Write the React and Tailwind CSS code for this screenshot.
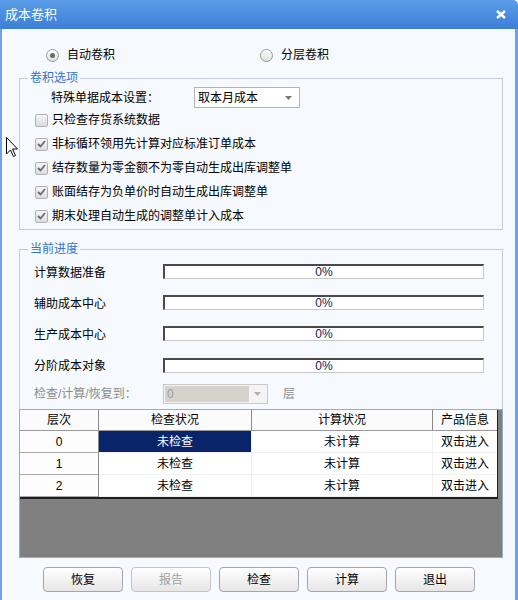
import React from "react"

const font = "font-['Liberation_Sans','Noto_Sans_CJK_SC',sans-serif]"

function Radio({ checked, label }) {
  return (
    <div className="flex items-center gap-[8px]">
      <span className="w-[13px] h-[13px] rounded-full border border-[#9a9a9a] bg-gradient-to-b from-[#ffffff] to-[#dedede] flex items-center justify-center">
        {checked && <span className="w-[5px] h-[5px] rounded-full bg-[#6b6b6b]" />}
      </span>
      <span>{label}</span>
    </div>
  )
}

function Check({ checked, label }) {
  return (
    <div className="h-[24px] flex items-center pl-[15px] gap-[4px]">
      <span className="w-[13px] h-[13px] rounded-[2px] border border-[#b0b0b0] bg-gradient-to-b from-[#f6f6f6] to-[#dcdcdc] flex items-center justify-center">
        {checked && (
          <svg width="9" height="8" viewBox="0 0 9 8">
            <path d="M1 4 L3.5 6.5 L8 1" fill="none" stroke="#6a6a6a" strokeWidth="1.8" />
          </svg>
        )}
      </span>
      <span>{label}</span>
    </div>
  )
}

function Progress({ label, h }) {
  return (
    <div className={`${h} flex items-center pl-[14px]`}>
      <span className="w-[129px] pt-[2px]">{label}</span>
      <div className="w-[321px] h-[15px] bg-white border-t-2 border-l-2 border-r border-b border-t-[#4a4a4a] border-l-[#4a4a4a] border-r-[#c8c8c8] border-b-[#c8c8c8] flex items-center justify-center text-[#1a1a50] leading-none">
        0%
      </div>
    </div>
  )
}

function Button({ label, disabled }) {
  return (
    <button
      className={`w-[80px] h-[25px] rounded-[4px] border bg-gradient-to-b from-[#ffffff] to-[#e6e6e6] text-[12px] ${
        disabled ? "border-[#c4c4c4] text-[#a0a0a0]" : "border-[#a6a6a6] text-black"
      }`}
    >
      {label}
    </button>
  )
}

const rows = [
  { level: "0", check: "未检查", calc: "未计算", info: "双击进入", selected: true },
  { level: "1", check: "未检查", calc: "未计算", info: "双击进入" },
  { level: "2", check: "未检查", calc: "未计算", info: "双击进入" },
]

export default function App() {
  return (
    <div className={`relative w-[518px] h-[600px] overflow-hidden flex flex-col text-[12px] text-black ${font}`}>
      {/* Title bar */}
      <div className="h-[29px] shrink-0 rounded-tr-[5px] bg-gradient-to-b from-[#5b9ce8] to-[#3c7fd6] flex items-center justify-between pl-[5px] pr-[12px] text-white text-[13px]">
        <span>成本卷积</span>
        <svg width="10" height="9" viewBox="0 0 10 9">
          <path d="M1 1 L9 8 M9 1 L1 8" stroke="#ffffff" strokeWidth="2.4" />
        </svg>
      </div>

      {/* Body */}
      <div className="flex-1 bg-[#f6f9fe] border-l-2 border-r-[3px] border-[#6fa3e4] pl-[17px]">
        <div className="h-[16px] mt-[18px] flex items-center">
          <div className="ml-[27px] w-[214px]">
            <Radio checked label="自动卷积" />
          </div>
          <Radio label="分层卷积" />
        </div>

        {/* 卷积选项 */}
        <fieldset className="mt-[8px] w-[484px] border border-[#c2ccd8] pb-[1px]">
          <legend className="ml-[8px] px-[2px] leading-[14px] text-[#3874c8]">卷积选项</legend>
          <div className="h-[21px] mt-[2px] flex items-center pl-[31px]">
            <span className="w-[143px]">特殊单据成本设置：</span>
            <div className="w-[106px] h-[21px] bg-white border border-[#b4b4b4] flex items-center justify-between pl-[3px] pr-[7px]">
              <span>取本月成本</span>
              <svg width="7" height="4" viewBox="0 0 7 4">
                <path d="M0 0 H7 L3.5 4 Z" fill="#777777" />
              </svg>
            </div>
          </div>
          <Check label="只检查存货系统数据" />
          <Check checked label="非标循环领用先计算对应标准订单成本" />
          <Check checked label="结存数量为零金额不为零自动生成出库调整单" />
          <Check checked label="账面结存为负单价时自动生成出库调整单" />
          <Check checked label="期末处理自动生成的调整单计入成本" />
        </fieldset>

        {/* 当前进度 */}
        <fieldset className="mt-[12px] w-[484px] border border-b-0 border-[#c2ccd8]">
          <legend className="ml-[8px] px-[2px] leading-[14px] text-[#3874c8]">当前进度</legend>
          <Progress label="计算数据准备" h="h-[31px]" />
          <Progress label="辅助成本中心" h="h-[31px]" />
          <Progress label="生产成本中心" h="h-[31px]" />
          <Progress label="分阶成本对象" h="h-[32px]" />
          <div className="h-[26px] flex items-center pl-[14px] text-[#8c8c8c]">
            <span className="w-[129px]">检查/计算/恢复到：</span>
            <div className="w-[105px] h-[20px] border border-[#c8c8c8] bg-[#f4f4f4] flex items-center p-[1px]">
              <div className="w-[84px] h-full bg-[#d6d3cc] flex items-center pl-[2px] text-[#9a9a9a]">0</div>
              <div className="flex-1 flex items-center justify-center">
                <svg width="7" height="4" viewBox="0 0 7 4">
                  <path d="M0 0 H7 L3.5 4 Z" fill="#b0b0b0" />
                </svg>
              </div>
            </div>
            <span className="ml-[15px]">层</span>
          </div>

          {/* Grid */}
          <div className="mt-[2px] -mx-px h-[149px] border border-[#8eb0cc] bg-[#808080]">
            <div className="w-[478px] border-r border-b-2 border-[#1e1e1e] bg-white">
              <div className="h-[21px] flex bg-[#fbfbfb] border-b border-[#9a9a9a]">
                <div className="w-[79px] border-r border-[#8a8a8a] flex items-center justify-center">层次</div>
                <div className="w-[153px] border-r border-[#8a8a8a] flex items-center justify-center">检查状况</div>
                <div className="w-[181px] border-r border-[#8a8a8a] flex items-center justify-center">计算状况</div>
                <div className="w-[64px] flex items-center justify-center">产品信息</div>
              </div>
              {rows.map((r) => (
                <div key={r.level} className="h-[22px] flex">
                  <div className="w-[79px] bg-[#fdfdfd] border-r border-b border-r-[#8a8a8a] border-b-[#a8a8a8] flex items-center justify-center">
                    {r.level}
                  </div>
                  <div
                    className={`w-[153px] flex items-center justify-center border-r border-b border-[#f0f0f0] ${
                      r.selected ? "bg-[#0a246a] text-white" : ""
                    }`}
                  >
                    {r.check}
                  </div>
                  <div className="w-[181px] flex items-center justify-center border-r border-b border-[#f0f0f0]">{r.calc}</div>
                  <div className="w-[64px] flex items-center justify-center border-b border-[#f0f0f0]">{r.info}</div>
                </div>
              ))}
            </div>
          </div>
        </fieldset>

        {/* Buttons */}
        <div className="mt-[9px] ml-[24px] flex gap-[8px]">
          <Button label="恢复" />
          <Button label="报告" disabled />
          <Button label="检查" />
          <Button label="计算" />
          <Button label="退出" />
        </div>
      </div>

      {/* mouse cursor */}
      <svg className="absolute left-[6px] top-[137px]" width="12" height="21" viewBox="0 0 12 21">
        <path d="M0.5 0.5 V17 L4.5 13 L7.5 19.5 L9.5 18.5 L6.5 12 H11.5 Z" fill="#ffffff" stroke="#000000" strokeWidth="1" />
      </svg>
    </div>
  )
}
